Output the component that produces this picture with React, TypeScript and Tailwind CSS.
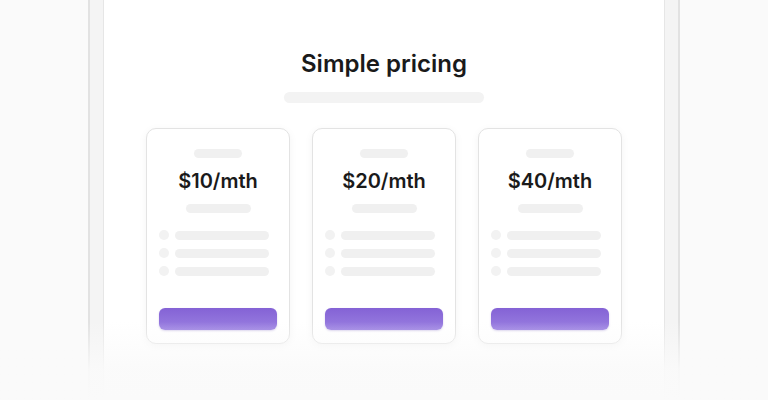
const PLANS = ['$10/mth', '$20/mth', '$40/mth'];

function PlanCard({ price }: { price: string }) {
  return (
    <div className="w-[144px] rounded-[10px] border border-[#e3e3e3] bg-white px-[12px] pt-[20px] pb-[13px] shadow-[0_2px_8px_rgba(0,0,0,0.05)] flex flex-col items-center">
      <div className="h-[9px] w-[48px] rounded-full bg-[#f0f0f0]" />
      <div className="mt-[9px] h-[28px] leading-[28px] text-[20px] font-semibold text-[#1a1a1a]">
        {price}
      </div>
      <div className="mt-[9px] h-[9px] w-[65px] rounded-full bg-[#f0f0f0]" />
      <div className="mt-[17px] w-full flex flex-col gap-[8px]">
        {[0, 1, 2].map((i) => (
          <div key={i} className="flex items-center gap-[6px]">
            <div className="h-[10px] w-[10px] rounded-full bg-[#f2f2f2]" />
            <div className="h-[9px] w-[94px] rounded-full bg-[#f0f0f0]" />
          </div>
        ))}
      </div>
      <div className="mt-[32px] h-[22px] w-full rounded-[6px] bg-gradient-to-b from-[#8462d5] to-[#9a7fe1] shadow-[0_1px_2px_rgba(100,70,180,0.25)]" />
    </div>
  );
}

export default function App() {
  return (
    <div className="relative w-[768px] h-[400px] overflow-hidden bg-[#fafafa] flex justify-center" style={{ fontFamily: 'Inter, "Noto Sans", sans-serif' }}>
      {/* device frame */}
      <div className="w-[592px] h-full border-x-[2px] border-[#e2e2e2] bg-[#f4f4f4] px-[13px]">
        <div className="h-full border-x border-[#e6e6e6] bg-white flex flex-col items-center pt-[48px]">
          <h1 className="h-[32px] leading-[32px] text-[24px] font-semibold text-[#1a1a1a]">
            Simple pricing
          </h1>
          <div className="mt-[12px] h-[11px] w-[200px] rounded-full bg-[#f3f3f3]" />
          <div className="mt-[25px] flex gap-[22px]">
            {PLANS.map((p) => (
              <PlanCard key={p} price={p} />
            ))}
          </div>
        </div>
      </div>

      {/* bottom fade */}
      <div className="absolute left-0 right-0 bottom-0 h-[78px] bg-gradient-to-b from-[#fafafa]/0 via-[#fafafa]/90 via-60% to-[#fafafa]" />
    </div>
  );
}
